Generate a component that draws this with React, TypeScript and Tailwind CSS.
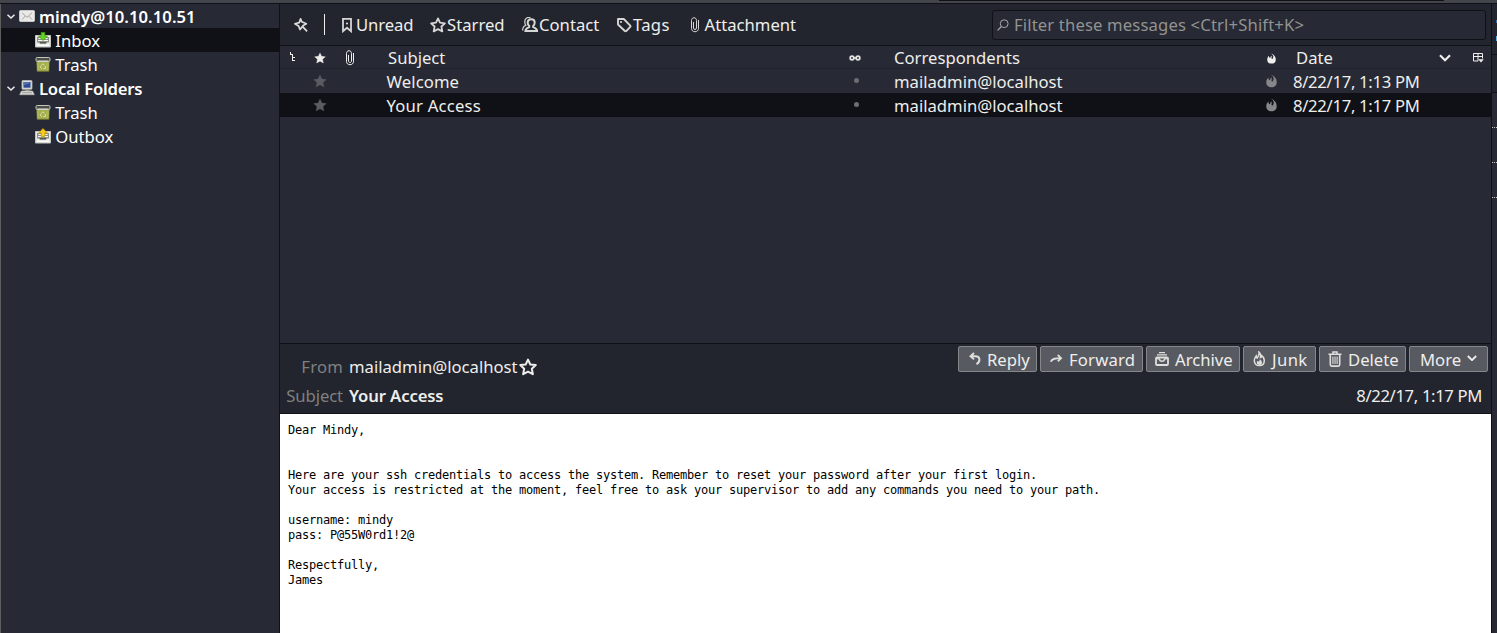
import React from "react";

type P = { className?: string };

const Svg = ({ w = 16, h = 16, className = "", children }: { w?: number; h?: number; className?: string; children: React.ReactNode }) => (
  <svg width={w} height={h} viewBox={`0 0 ${w} ${h}`} fill="none" className={`shrink-0 ${className}`}>
    {children}
  </svg>
);

const Twisty = () => (
  <Svg w={10} h={10}>
    <path d="M1.5 3.800 5 7 8.5 3.800" stroke="#eeeeec" strokeWidth="1.5" />
  </Svg>
);

const MailIcon = () => (
  <Svg>
    <rect x="0.5" y="2.5" width="15" height="11" rx="1" fill="#e9e9e7" stroke="#c9c9c6" />
    <path d="M3 11.5 6.3 8 M13 11.5 9.7 8 M3 4.8 8 9.3 13 4.8" stroke="#a5a6a2" strokeWidth="1" />
  </Svg>
);

const TrayIcon = ({ up = false }: { up?: boolean }) => (
  <Svg>
    <path d="M.5 3.500h15v11.500H.5z" fill="#e8e8e5" stroke="#c4c5c1" />
    <path d="M2 5h12v5.500h-2l-1.200 1.700H5.200L4 10.500H2z" fill="#8d908a" />
    <path d="M3.500 6.500h9M3 8.500h10" stroke="#f4f4f2" />
    <path d="M5 10.500h6" stroke="#55574f" />
    <path d="M2 13.200h12" stroke="#fff" strokeWidth="1.500" />
    {up ? (
      <path d="M8 .6 12.300 4.900H9.800v3.600H6.200V4.900H3.700z" fill="#fccb1b" stroke="#c89c00" strokeWidth=".8" />
    ) : (
      <path d="M8 8.500 3.700 4.200h2.500V.4h3.600v3.800h2.500z" fill="#62d622" stroke="#3f9a06" strokeWidth=".8" />
    )}
  </Svg>
);

const TrashFolderIcon = () => (
  <Svg>
    <path d="M1.700 5h12.600l-.5 10.300H2.200z" fill="#a3ae4d" stroke="#70782f" strokeWidth=".8" />
    <path d="M3 7v7.500M13 7v7.500" stroke="#b9c36c" />
    <rect x="1" y="1.500" width="14" height="4" rx="1.200" fill="#4c4f48" stroke="#c3c6bb" strokeWidth="1" />
    <path d="M2.500 5h11" stroke="#dfe2d6" />
    <path d="m6.200 9.500 1.600-1.800 1.800 1.600M10.400 10l.3 2.300-2.400.5M7 12.800l-1.700-1.500.8-1.500" stroke="#dde2b5" strokeWidth="1" />
  </Svg>
);

const ComputerIcon = () => (
  <Svg>
    <rect x="3" y=".5" width="10" height="8.800" rx=".8" fill="#dcdcd9" stroke="#b9bab5" strokeWidth=".8" />
    <rect x="4.500" y="2" width="7" height="5.700" fill="#2c4a94" />
    <path d="M4.500 5.500 11.500 3V2h-7z" fill="#536fae" />
    <path d="M6 9.500h4.500V11H6z" fill="#8a8c87" />
    <path d="M2.500 11h11l1.800 3.700H.7z" fill="#e3e3e0" stroke="#aeb0aa" strokeWidth=".8" />
    <path d="M3 12.800h10" stroke="#92948f" />
  </Svg>
);

const PinIcon = () => (
  <Svg>
    <path d="M7.600 1.900 8.700 4.800 13.300 6.800 10.200 8.600 7 12.500 5.600 9 1.900 6.700 6.200 5.600z" stroke="#dcdcda" strokeWidth="1.700" strokeLinejoin="round" />
    <path d="m9.600 9.600 4.500 4.700" stroke="#dcdcda" strokeWidth="1.700" />
  </Svg>
);

const BookmarkIcon = () => (
  <Svg w={12} h={16}>
    <path d="M2 1.900h8v12.300L6 10.700l-4 3.500z" stroke="#d6d6d4" strokeWidth="1.800" />
    <circle cx="6" cy="6.500" r="1.100" fill="#d6d6d4" />
  </Svg>
);

const StarOutline = ({ w = 16, className = "" }: { w?: number; className?: string }) => (
  <svg width={w} height={w} viewBox="0 0 16 16" className={`shrink-0 ${className}`} fill="none">
    <path d="m8 1.400 2 4.300 4.900.6-3.500 3.200.9 4.900L8 12.100l-4.300 2.300.9-4.900L1.100 6.300 6 5.700z" stroke="currentColor" strokeWidth="1.800" strokeLinejoin="round" />
  </svg>
);

const StarSolid = ({ w = 14, className = "" }: { w?: number; className?: string }) => (
  <svg width={w} height={w} viewBox="0 0 16 16" className={`shrink-0 ${className}`}>
    <path d="m8 1.200 2.100 4.600 5 .6-3.700 3.400 1 4.900L8 12.300l-4.400 2.400 1-4.900L.9 6.400l5-.6z" fill="currentColor" stroke="currentColor" strokeWidth=".5" strokeLinejoin="round" />
  </svg>
);

const ContactIcon = () => (
  <Svg>
    <path d="M9.200 2.300c2.400 0 3.500 1.400 3.500 3.300 0 1.600-.6 2.800-1.500 3.500v1c1.900.6 3.600 1.400 3.900 3.900H3.400c.2-2.500 2-3.300 3.800-3.900v-1C6.300 8.400 5.700 7.200 5.700 5.600c0-1.900 1.100-3.300 3.500-3.300z" stroke="#d6d6d4" strokeWidth="2" />
    <path d="M8.500.5C4.500-.1 2.700 2 2.800 5c0 1.400.4 2.500 1 3.300C1.900 9 .7 10.500.6 13.500" stroke="#d6d6d4" strokeWidth="1.200" />
  </Svg>
);

const TagIcon = () => (
  <Svg>
    <path d="M2 2h5.800l6.200 6.300c.7.700.7 1.200 0 1.900l-3.500 3.600c-.7.700-1.200.7-1.900 0L2 7.500z" stroke="#d6d6d4" strokeWidth="1.900" strokeLinejoin="round" />
    <circle cx="5" cy="5" r="1.100" fill="#d6d6d4" />
  </Svg>
);

const ClipIcon = ({ className = "" }: P) => (
  <Svg w={10} h={16} className={className}>
    <path d="M3.500 5v6c0 2 3 2 3 0V3.500C6.500-.2 1.500-.2 1.500 3.500v8c0 4.300 7 4.300 7 0V3" stroke="currentColor" strokeWidth="1" />
  </Svg>
);

const SearchIcon = () => (
  <Svg w={12} h={12}>
    <circle cx="7.200" cy="4.700" r="3.900" stroke="#a9a9a9" strokeWidth="1" />
    <path d="M4.400 7.500.6 11.400" stroke="#a9a9a9" strokeWidth="1.200" />
  </Svg>
);

const ThreadIcon = () => (
  <Svg w={7} h={11}>
    <path d="M.5 1v2M0 3.500h3M2.500 3v7M2.500 6.500H5M2.500 9.500H5" stroke="#eeeeec" />
  </Svg>
);

const GlassesIcon = () => (
  <Svg w={12} h={6}>
    <circle cx="3" cy="3" r="1.800" stroke="#e2e2e0" strokeWidth="1.800" />
    <circle cx="9" cy="3" r="1.800" stroke="#e2e2e0" strokeWidth="1.800" />
    <path d="M4 3h4" stroke="#e2e2e0" strokeWidth="1.700" />
  </Svg>
);

const Flame = ({ w = 12, h = 14, className = "" }: { w?: number; h?: number; className?: string }) => (
  <svg width={w} height={h} viewBox="0 0 12 14" className={`shrink-0 ${className}`}>
    <path d="M4.700.2C8 1 8.900 3.300 8 6.300 7.700 7.800 6.500 8 6.100 7 5.700 6 6.500 4.500 6.300 3.200 4.700 3.800 4.600 5.300 4.300 6.300 3 6 2.600 4.700 2.700 3.300 1.200 4.500.3 6.400.3 8.500c0 3.200 2.300 5.300 5.700 5.300s5.700-2.100 5.700-5.300c0-2.300-.8-4.400-2.400-5.800C8.600 1.300 6.700.2 4.700.2z" fill="currentColor" />
  </svg>
);

const ColumnPicker = () => (
  <Svg w={11} h={10}>
    <path d="M.5.5h9v5M.5.500v7.500h4.500M.5 3.500h9M5 .5v7.500" stroke="#eeeeec" />
    <path d="M5.200 6.200h5.600L8 9.500z" fill="#eeeeec" />
  </Svg>
);

const Chevron = ({ w = 12, className = "" }: { w?: number; className?: string }) => (
  <svg width={w} height={(w * 8) / 12} viewBox="0 0 12 8" fill="none" className={`shrink-0 ${className}`}>
    <path d="m1 1.200 5 5 5-5" stroke="#eeeeec" strokeWidth="2.200" />
  </svg>
);

const ReplyIcon = () => (
  <Svg w={12} h={14}>
    <path d="M5 1 1.500 4.200 5 7.400M2 4.200h4.500c5 0 5.200 5.500 1 8" stroke="#dededc" strokeWidth="1.900" />
  </Svg>
);
const ForwardIcon = () => (
  <Svg w={13} h={12}>
    <path d="M.8 8.800C2 5.300 6 5.200 11 5.200M7.800 2l3.300 3.200L7.800 8.400" stroke="#dededc" strokeWidth="1.800" />
  </Svg>
);
const ArchiveIcon = () => (
  <Svg w={14} h={14}>
    <path d="M4 .6h6M2 2.900h10" stroke="#dededc" strokeWidth="1.200" />
    <rect x="1" y="5.500" width="12" height="7.500" rx="1" stroke="#dededc" strokeWidth="1.800" />
    <path d="M2 6.500 4.500 7c.2 3 4.800 3 5 0l2.500-.5" stroke="#dededc" strokeWidth="1.500" />
  </Svg>
);
const JunkIcon = () => (
  <Svg w={13} h={16}>
    <path d="M6 1.200c2 1.500 1.700 3.700 1.400 5.400.9-.2 1.200-1.300 1-2.300 1.800 1.300 2.900 3 2.900 5.200 0 3-2 5.100-5 5.100s-5-2.100-5-5c0-2.200 1.100-3.600 1.900-4.600.1 1.100.3 1.700.9 2.100C5.200 5.400 6.600 4 6 1.200z" stroke="#dededc" strokeWidth="1.500" />
    <path d="M6.800 8.300c1.500 1.200 2.200 2 2.200 3.300 0 1.400-1.100 2.300-2.600 2.300s-2.600-1-2.600-2.300c0-.8.4-1.400.8-1.900l.9 1C6.400 10.300 6.700 9.500 6.800 8.300z" fill="#dededc" />
  </Svg>
);
const DeleteIcon = () => (
  <Svg w={14} h={16}>
    <path d="M.5 3.200h13M5 2.500V1h4v1.500" stroke="#dededc" strokeWidth="1.500" />
    <path d="M2.300 4v9.500c0 1 .6 1.600 1.500 1.600h6.400c.9 0 1.500-.6 1.500-1.600V4" stroke="#dededc" strokeWidth="1.600" />
    <path d="M4.900 5.500v7.500M7 5.500v7.500M9.100 5.500v7.500" stroke="#dededc" strokeWidth="1.100" />
  </Svg>
);

const Folder = ({ icon, label, selected = false }: { icon: React.ReactNode; label: string; selected?: boolean }) => (
  <div className={`flex h-6 items-center gap-1 pl-[34px] ${selected ? "bg-[#101116]" : ""}`}>
    {icon}
    <span className="pt-[2px] pl-[0.3px]">{label}</span>
  </div>
);

const Account = ({ icon, label, tracking }: { icon: React.ReactNode; label: string; tracking: string }) => (
  <div className="flex h-6 items-center pl-[5px] font-semibold">
    <Twisty />
    <span className="ml-[3px] flex">{icon}</span>
    <span className={`ml-1 pt-[2px] ${tracking}`}>{label}</span>
  </div>
);

const columns = "grid grid-cols-[24px_32px_50px_463px_45px_370px_29px_1fr] items-center";

const Row = ({ subject, date, selected = false }: { subject: string; date: string; selected?: boolean }) => (
  <div className={`${columns} h-6 leading-[22px] ${selected ? "bg-[#101116]" : ""}`}>
    <span />
    <StarSolid className="ml-[9px] text-[#5b5c61]" />
    <span />
    <span className={`pt-[2px] pl-[0.5px] ${selected ? "tracking-[0.2px]" : "tracking-[0.1px]"}`}>{subject}</span>
    <span className="-mt-px ml-[5px] size-[5px] rounded-full bg-[#6d6e72]" />
    <span className="pt-[2px]">{"mailadmin@localhost"}</span>
    <Flame w={11} h={14} className="ml-[2px] text-[#86878a]" />
    <span className="pt-[2px] tracking-[-0.3px]">{date}</span>
  </div>
);

const Action = ({ width, icon, label, gap }: { width: string; icon?: React.ReactNode; label: string; gap: string }) => (
  <button className={`flex h-[26px] items-center rounded-[2px] border border-[#85878b] bg-[#575a61] ${width} ${gap}`}>
    {icon}
    <span className="pt-[2px]">{label}</span>
    {!icon && <Chevron w={10} className="-mt-0.5" />}
  </button>
);

const message = `Dear Mindy,


Here are your ssh credentials to access the system. Remember to reset your password after your first login.
Your access is restricted at the moment, feel free to ask your supervisor to add any commands you need to your path.

username: mindy
pass: P@55W0rd1!2@

Respectfully,
James`;

export default function App() {
  return (
    <div className="flex h-[633px] w-[1497px] flex-col overflow-hidden bg-[#272934] font-['Noto_Sans',sans-serif] text-[16.67px] leading-6 whitespace-nowrap text-[#eeeeec]">
      <div className="flex h-1 shrink-0 flex-col border-b border-[#101116] bg-[#43454d]">
        <div className="ml-[939px] h-px w-[505px] bg-[#101116]" />
      </div>
      <div className="flex min-h-0 flex-1">
        <aside className="w-[280px] shrink-0 border-r border-l border-r-[#101116] border-l-[#5d5d5d] text-white">
          <Account icon={<MailIcon />} label="mindy@10.10.10.51" tracking="tracking-[0.05px]" />
          <Folder icon={<TrayIcon />} label="Inbox" selected />
          <Folder icon={<TrashFolderIcon />} label="Trash" />
          <Account icon={<ComputerIcon />} label="Local Folders" tracking="tracking-[-0.22px]" />
          <Folder icon={<TrashFolderIcon />} label="Trash" />
          <Folder icon={<TrayIcon up />} label="Outbox" />
        </aside>

        <main className="flex w-[1212px] shrink-0 flex-col border-r border-[#101116]">
          <div className="flex h-[42px] items-center border-b border-[#101116] bg-[#23252e] pl-[13px]">
            <PinIcon />
            <span className="ml-[15px] h-[21px] w-px bg-[#eeeeec]" />
            <span className="ml-4 flex w-[89px] items-center gap-[3px] tracking-[-0.1px]"><BookmarkIcon />Unread</span>
            <span className="flex w-[92px] items-center gap-px"><StarOutline className="text-[#d6d6d4]" />Starred</span>
            <span className="flex w-[94px] items-center gap-px"><ContactIcon />Contact</span>
            <span className="flex w-[74px] items-center gap-px tracking-[0.3px]"><TagIcon />Tags</span>
            <span className="flex items-center gap-[4.5px]"><ClipIcon className="text-[#d6d6d4]" />Attachment</span>
            <div className="mr-[5px] ml-auto flex h-[30px] w-[494px] items-center gap-[5px] rounded-[3px] border border-[#101116] bg-[#272934] pl-1 text-[#929391]">
              <SearchIcon />
              <span className="tracking-[0.14px]">{"Filter these messages <Ctrl+Shift+K>"}</span>
            </div>
          </div>

          <div className={`${columns} h-[23px] border-b border-[#22242c]`}>
            <span className="pb-1 pl-[10px]"><ThreadIcon /></span>
            <StarSolid w={12} className="ml-[10px]" />
            <ClipIcon className="ml-[9px]" />
            <span className="pl-[2px]">Subject</span>
            <GlassesIcon />
            <span>Correspondents</span>
            <Flame w={9} h={11} className="ml-[3px]" />
            <span className="flex items-center pl-[3px]">
              Date
              <Chevron className="ml-auto" />
              <span className="mr-[7px] ml-[22px]"><ColumnPicker /></span>
            </span>
          </div>
          <div className="h-[274px] shrink-0">
            <Row subject="Welcome" date="8/22/17, 1:13 PM" />
            <Row subject="Your Access" date="8/22/17, 1:17 PM" selected />
          </div>

          <header className="flex h-[71px] shrink-0 justify-between border-y border-[#101116] bg-[#23252e]">
            <div className="grid grid-cols-[63px_auto] content-start gap-x-[6px] gap-y-[5px] pt-[11px]">
              <span className="text-right tracking-[0.2px] text-[#7f8080]">From</span>
              <span className="flex items-center">{"mailadmin@localhost"}<StarOutline w={18} className="ml-[1.5px]" /></span>
              <span className="text-right tracking-[-0.1px] text-[#7f8080]">Subject</span>
              <span className="font-semibold tracking-[-0.12px]">Your Access</span>
            </div>
            <div className="flex flex-col items-end pt-[2px]">
              <div className="mr-[3px] flex gap-[3px]">
                <Action width="w-[79px]" gap="gap-[6px] pl-[10px]" icon={<ReplyIcon />} label="Reply" />
                <Action width="w-[103px]" gap="gap-[6px] pl-[9px] tracking-[0.2px]" icon={<ForwardIcon />} label="Forward" />
                <Action width="w-[94px]" gap="gap-[6px] pl-[8px]" icon={<ArchiveIcon />} label="Archive" />
                <Action width="w-[73px]" gap="gap-[6px] pl-[9px] tracking-[0.4px]" icon={<JunkIcon />} label="Junk" />
                <Action width="w-[87px]" gap="gap-[6px] pl-[8px]" icon={<DeleteIcon />} label="Delete" />
                <Action width="w-[79px]" gap="gap-[6px] pl-[10px]" label="More" />
              </div>
              <span className="mt-[12px] mr-[9px] tracking-[-0.35px]">8/22/17, 1:17 PM</span>
            </div>
          </header>

          <pre className="min-h-0 flex-1 bg-white pt-[9px] pl-2 font-['DejaVu_Sans_Mono',monospace] text-[12px] leading-[15px] tracking-[-0.224px] text-black">
            {message}
          </pre>
        </main>

        <div className="flex w-[5px] flex-col">
          <div className="flex h-[51px] flex-col border-b border-[#101116] bg-[#23252e] pt-4 pl-1">
            <span className="h-[3px] bg-[#2a6fc0]" />
            <span className="mt-[13px] h-[5px] bg-[#58b4ee]" />
          </div>
          <div className="h-[38px] border-b border-[#101116] bg-[#23252e]" />
          <div className="h-[35px] border-b border-dotted border-[#c8c8c8]" />
          <div className="h-[35px] border-b border-dotted border-[#c8c8c8]" />
          <div className="h-[35px] border-b border-dotted border-[#c8c8c8]" />
        </div>
      </div>
    </div>
  );
}
